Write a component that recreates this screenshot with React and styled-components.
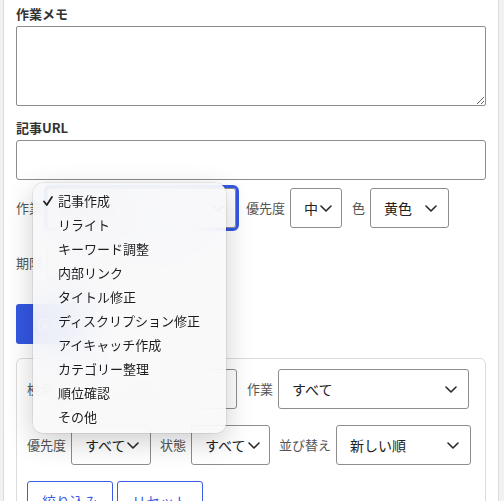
import React from "react";
import styled, { createGlobalStyle } from "styled-components";

const GlobalStyle = createGlobalStyle`
  html, body {
    margin: 0;
    padding: 0;
    background: #f1f1f1;
    overflow: hidden;
  }
  body {
    font-family: "Noto Sans CJK JP", "Noto Sans", sans-serif;
    color: #222;
  }
  * {
    box-sizing: border-box;
  }
`;

const TASKS = [
  "記事作成",
  "リライト",
  "キーワード調整",
  "内部リンク",
  "タイトル修正",
  "ディスクリプション修正",
  "アイキャッチ作成",
  "カテゴリー整理",
  "順位確認",
  "その他",
];

const Chevron = () => (
  <svg width="12" height="7" viewBox="0 0 12 7" fill="none">
    <polyline
      points="1,1 6,6 11,1"
      stroke="#2a2a2a"
      strokeWidth="1.6"
      strokeLinecap="round"
      strokeLinejoin="round"
    />
  </svg>
);

const Check = () => (
  <svg width="10" height="10" viewBox="0 0 10 10" fill="none">
    <polyline
      points="1,5.5 3.8,9 9,1"
      stroke="#1d1d1f"
      strokeWidth="1.7"
      strokeLinecap="round"
      strokeLinejoin="round"
    />
  </svg>
);

const Select = ({ value, width, focused, children }) => (
  <SelectBox $width={width} $focused={focused}>
    <span>{value}</span>
    <Chevron />
    {children}
  </SelectBox>
);

const App = () => {
  return (
    <>
      <GlobalStyle />
      <Page>
        <Card>
          <SectionLabel>作業メモ</SectionLabel>
          <TextArea />
          <SectionLabel $top={13}>記事URL</SectionLabel>
          <TextInput />

          <Row $top={8}>
            <Field>
              <FieldLabel>作業</FieldLabel>
              <Select value="記事作成" width={189} focused>
                <Menu>
                  {TASKS.map((task, i) => (
                    <MenuItem key={task}>
                      {i === 0 && (
                        <CheckMark>
                          <Check />
                        </CheckMark>
                      )}
                      {task}
                    </MenuItem>
                  ))}
                </Menu>
              </Select>
            </Field>
            <Field>
              <FieldLabel>優先度</FieldLabel>
              <Select value="中" width={52} />
            </Field>
            <Field>
              <FieldLabel>色</FieldLabel>
              <Select value="黄色" width={79} />
            </Field>
          </Row>

          <Row $top={15}>
            <Field>
              <FieldLabel>期限</FieldLabel>
              <DateBox>
                <span>年/月/日</span>
                <svg width="14" height="14" viewBox="0 0 14 14" fill="none">
                  <rect x="1.5" y="2.5" width="11" height="10" rx="1.5" stroke="#555" />
                  <line x1="1.5" y1="5.5" x2="12.5" y2="5.5" stroke="#555" />
                </svg>
              </DateBox>
            </Field>
          </Row>

          <PrimaryButton>保存</PrimaryButton>

          <FilterCard>
            <FilterRow>
              <Field>
                <FieldLabel>検索</FieldLabel>
                <SearchInput placeholder="タイトル・URL・メモ" />
              </Field>
              <Field>
                <FieldLabel>作業</FieldLabel>
                <Select value="すべて" width={191} />
              </Field>
            </FilterRow>
            <FilterRow $gap={9}>
              <Field>
                <FieldLabel>優先度</FieldLabel>
                <Select value="すべて" width={80} />
              </Field>
              <Field>
                <FieldLabel>状態</FieldLabel>
                <Select value="すべて" width={79} />
              </Field>
              <Field>
                <FieldLabel>並び替え</FieldLabel>
                <Select value="新しい順" width={135} />
              </Field>
            </FilterRow>
            <ButtonRow>
              <OutlineButton>絞り込み</OutlineButton>
              <OutlineButton>リセット</OutlineButton>
            </ButtonRow>
          </FilterCard>
        </Card>
      </Page>
    </>
  );
};

const Page = styled.div`
  padding-left: 3px;
  height: 501px;
  overflow: hidden;
`;

const Card = styled.div`
  width: 496px;
  margin-top: -12px;
  padding: 16px 12px 40px;
  background: #fff;
  border: 1px solid #dcdcdc;
`;

const SectionLabel = styled.div`
  margin-top: ${({ $top }) => $top || 0}px;
  margin-bottom: 3px;
  font-size: 13px;
  font-weight: 700;
  line-height: 18px;
  color: #333;
`;

const TextArea = styled.textarea`
  display: block;
  width: 100%;
  height: 80px;
  border: 1px solid #8c8c8c;
  border-radius: 2px;
  resize: vertical;
  font-family: inherit;
`;

const TextInput = styled.input`
  display: block;
  width: 100%;
  height: 40px;
  border: 1px solid #8c8c8c;
  border-radius: 3px;
`;

const Row = styled.div`
  display: flex;
  align-items: center;
  gap: 10px;
  margin-top: ${({ $top }) => $top}px;
`;

const Field = styled.div`
  display: flex;
  align-items: center;
  gap: 5px;
`;

const FieldLabel = styled.span`
  font-size: 13px;
  line-height: 18px;
  color: #555;
  white-space: nowrap;
`;

const SelectBox = styled.div`
  position: relative;
  display: flex;
  align-items: center;
  justify-content: space-between;
  gap: 2px;
  width: ${({ $width }) => $width}px;
  height: 40px;
  padding: 0 11px 0 13px;
  border: 1px solid #8d8d8d;
  border-radius: 3px;
  background: #fff;
  font-size: 14px;
  color: #222;
  white-space: nowrap;
  outline: ${({ $focused }) => ($focused ? "3px solid #3457e2" : "none")};
  svg {
    flex-shrink: 0;
  }
`;

const Menu = styled.div`
  position: absolute;
  left: -15px;
  top: -6px;
  z-index: 10;
  width: 193px;
  padding: 6px 0 4px;
  border-radius: 10px;
  background: rgba(248, 248, 250, 0.9);
  backdrop-filter: blur(20px);
  box-shadow: 0 0 0 0.5px rgba(0, 0, 0, 0.14), 0 8px 28px rgba(0, 0, 0, 0.2);
`;

const MenuItem = styled.div`
  position: relative;
  height: 24px;
  padding-left: 25px;
  font-size: 13px;
  line-height: 24px;
  color: #1d1d1f;
`;

const CheckMark = styled.span`
  position: absolute;
  left: 10px;
  top: 7px;
  display: flex;
`;

const DateBox = styled.div`
  display: flex;
  align-items: center;
  justify-content: space-between;
  width: 135px;
  height: 40px;
  padding: 0 10px 0 12px;
  border: 1px solid #8d8d8d;
  border-radius: 3px;
  font-size: 13px;
  color: #333;
`;

const PrimaryButton = styled.button`
  display: block;
  margin-top: 21px;
  height: 40px;
  padding: 0 20px;
  border: none;
  border-radius: 3px;
  background: #3457e2;
  color: #fff;
  font-family: inherit;
  font-size: 14px;
`;

const FilterCard = styled.div`
  display: flex;
  flex-direction: column;
  gap: 16px;
  margin-top: 14px;
  padding: 10px;
  border: 1px solid #dcdcdc;
  border-radius: 6px;
`;

const FilterRow = styled.div`
  display: flex;
  align-items: center;
  gap: ${({ $gap }) => $gap || 10}px;
`;

const SearchInput = styled.input`
  width: 179px;
  height: 40px;
  padding: 0 10px;
  border: 1px solid #8d8d8d;
  border-radius: 3px;
  font-family: inherit;
  font-size: 13px;
`;

const ButtonRow = styled.div`
  display: flex;
  gap: 4px;
`;

const OutlineButton = styled.button`
  width: 86px;
  height: 40px;
  border: 1px solid #3a5ce6;
  border-radius: 3px;
  background: #fff;
  color: #3a5ce6;
  font-family: inherit;
  font-size: 14px;
`;

export default App;
